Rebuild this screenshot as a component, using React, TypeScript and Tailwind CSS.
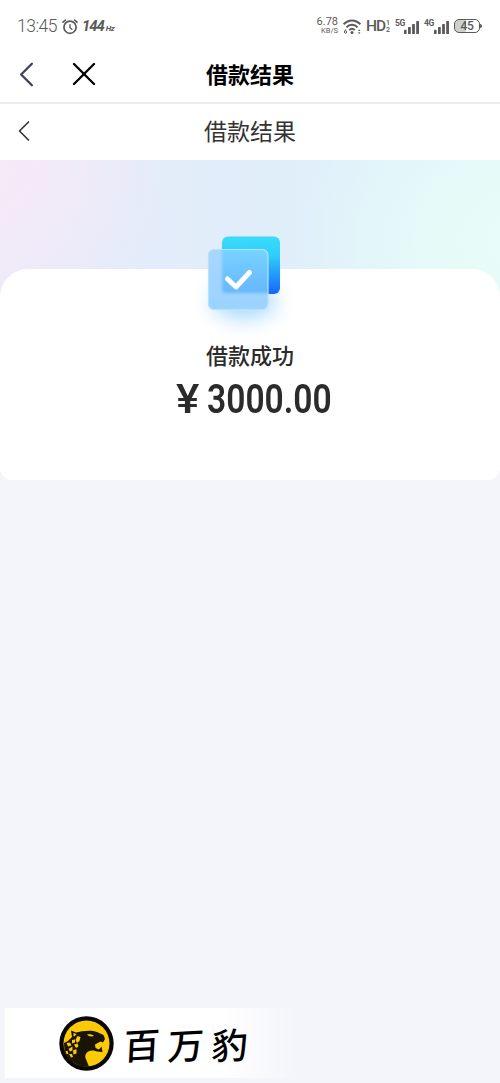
import { ChevronLeft, X } from "lucide-react";

function AlarmIcon() {
  return (
    <svg className="h-4 w-4 shrink-0" viewBox="0 0 16 16" fill="none" stroke="#5a5a5a" strokeLinecap="round">
      <circle cx="8" cy="8.2" r="6.1" strokeWidth="1.7" />
      <path d="M1 3.2 3.4 1.2M15 3.2 12.6 1.2" strokeWidth="1.6" />
      <path d="M8 5.6v3.1l1.9 1.5" strokeWidth="1.4" />
    </svg>
  );
}

function WifiIcon() {
  return (
    <svg className="h-4 w-[18px] shrink-0" viewBox="0 0 18 16" fill="none" stroke="#5a5a5a" strokeWidth="2">
      <path d="M.7 5.3C5.5.2 12.500.2 17.300 5.300" />
      <path d="M3.500 8.300c3-3.300 8-3.300 11 0" />
      <path d="M6.300 11.100c1.600-1.700 3.800-1.700 5.400 0" />
      <circle cx="9" cy="13.400" r="1.500" fill="#5a5a5a" stroke="none" />
      <path d="M2.800 10.400 1.700 12.200" strokeWidth="1" />
      <circle cx="2.500" cy="13" r="1.200" strokeWidth="1" />
      <path d="m15 12 1.200-1.800 1.200 1.800zm0 1.200 1.200 1.800 1.200-1.800z" fill="#5a5a5a" stroke="none" />
    </svg>
  );
}

function SignalIcon() {
  return (
    <svg className="h-[14px] w-[15px] shrink-0" viewBox="0 0 15 14" fill="#5a5a5a">
      <rect x="0" y="9.8" width="2.6" height="4.2" rx=".6" />
      <rect x="4" y="7" width="2.8" height="7" rx=".6" />
      <rect x="8.1" y="4" width="2.8" height="10" rx=".6" />
      <rect x="12.2" y="1" width="2.8" height="13" rx=".6" />
    </svg>
  );
}

function StatusBar() {
  return (
    <div className="flex h-[50px] items-center pt-[3px] pr-[18px] pl-[17px] text-[#5a5a5a]">
      <span className="w-[41px] text-[17.5px] leading-none font-light tracking-[-0.5px]">13:45</span>
      <span className="ml-1">
        <AlarmIcon />
      </span>
      <span className="ml-1 flex items-baseline leading-none font-bold italic">
        <span className="text-[15px] tracking-[-1.1px]">144</span>
        <span className="ml-0.5 text-[8px] tracking-[-0.5px]">Hz</span>
      </span>
      <div className="ml-auto flex items-center">
        <div className="mr-[5px] flex w-[22px] flex-col items-end pb-0.5">
          <span className="text-[11px] leading-[10px]">6.78</span>
          <span className="text-[7.5px] leading-[8px]">KB/S</span>
        </div>
        <WifiIcon />
        <span className="ml-[5px] w-[20px] text-[15.5px] leading-none font-medium tracking-[-1px]">HD</span>
        <span className="flex w-1 flex-col text-[7px] leading-[7px] font-medium">
          <span>1</span>
          <span>2</span>
        </span>
        <span className="ml-[5px] h-4 w-[9px] text-[8.5px] leading-[8px] font-bold tracking-[-0.5px]">5G</span>
        <SignalIcon />
        <span className="ml-[5px] h-4 w-[10px] text-[8.5px] leading-[8px] font-bold tracking-[-0.5px]">4G</span>
        <SignalIcon />
        <div className="-mt-px ml-[5px] flex items-center">
          <div className="flex h-[14px] w-[26px] items-center justify-center rounded-[5px] border-[1.5px] border-[#5a5a5a] bg-linear-to-r from-[#cfcfcf] from-45% to-white to-45% text-[12px] leading-none font-medium tracking-[-0.3px]">
            45
          </div>
          <span className="h-1 w-[2px] rounded-r bg-[#5a5a5a]" />
        </div>
      </div>
    </div>
  );
}

function SuccessIcon() {
  return (
    <svg className="h-[120px] w-[130px]" viewBox="0 0 130 120" fill="none">
      <defs>
        <linearGradient id="back" x1="71" y1="16" x2="73" y2="74" gradientUnits="userSpaceOnUse">
          <stop stopColor="#3bdcfa" />
          <stop offset=".35" stopColor="#2fcdfa" />
          <stop offset="1" stopColor="#1669fa" />
        </linearGradient>
        <linearGradient id="front" x1="50" y1="29" x2="50" y2="90" gradientUnits="userSpaceOnUse">
          <stop stopColor="#a8d7fd" />
          <stop offset="1" stopColor="#9bd3ff" />
        </linearGradient>
        <linearGradient id="overlap" x1="65" y1="29" x2="65" y2="74" gradientUnits="userSpaceOnUse">
          <stop stopColor="#77d3ff" />
          <stop offset="1" stopColor="#66b6fd" />
        </linearGradient>
        <filter id="glow" x="-50%" y="-80%" width="200%" height="260%">
          <feGaussianBlur stdDeviation="10" />
        </filter>
        <filter id="soft" x="-20%" y="-20%" width="140%" height="140%">
          <feGaussianBlur stdDeviation="1.5" />
        </filter>
        <clipPath id="tile">
          <rect x="28" y="29" width="60" height="61" rx="6" />
        </clipPath>
      </defs>
      <ellipse cx="64" cy="82" rx="32" ry="17" fill="#8dceff" opacity=".75" filter="url(#glow)" />
      <rect x="42" y="16.5" width="58" height="57.5" rx="6" fill="url(#back)" />
      <rect x="28" y="29" width="60" height="61" rx="6" fill="url(#front)" />
      <g clipPath="url(#tile)">
        <rect x="42" y="20" width="60" height="53" rx="4" fill="url(#overlap)" filter="url(#soft)" />
      </g>
      <rect x="28.5" y="29.5" width="59.5" height="60" rx="6" stroke="#b4e4ff" strokeWidth="1.2" />
      <path d="m47.5 59 8.5 8 13.5-14.5" stroke="#fff" strokeWidth="5" strokeLinecap="round" strokeLinejoin="round" />
    </svg>
  );
}

function LeopardLogo() {
  return (
    <svg className="h-[55px] w-[55px] shrink-0" viewBox="0 0 55 55">
      <circle cx="27.5" cy="27.5" r="27.2" fill="#090806" />
      <circle cx="27.5" cy="27.5" r="23" fill="#fdcb05" />
      <path
        d="M12 14.5 17 16.500C22 15.500 31 13.500 38 16L44.500 19 46 23 44 26.500 41.500 25.500 36 28.500 36.500 32 40 33.500 42.500 30.500 43.500 36 38 35.500 34.500 34.500C29 34 26 37.500 26.300 41.500L30 50.400C20 52 9 45 5.500 35L5 27 9 25 13 21Z"
        fill="#1b1303"
      />
      <path d="M28 18.500c3-.5 5.500 0 7 1.500-2.500.8-5.500.5-7-1.500Z" fill="#fdcb05" />
      <g fill="#fdcb05">
        <path d="m14.500 17 3 1-2 2.500-1-.5zM18.500 20l3 1-1 4-2.500 2-1.500-3zM13 24l3-.5 0 3-3 1zM7.500 27l3.500-.5 1.500 3-3.500 1zM15 28.500l3.500-1 1 3-2.500 1.500zM9.500 33l4-2.500 0 4-2.500 1zM6.500 35l2 0 1 3-2 0zM14 34.500l3.500-1.500 0 4.500-3 1zM10 38l3 0 1 3-2 .5z" />
      </g>
    </svg>
  );
}

export default function App() {
  return (
    <main className="flex h-[1083px] w-[500px] flex-col overflow-hidden bg-[#f4f5fa] font-[Roboto,'Noto_Sans_CJK_SC',sans-serif]">
      <header className="bg-white">
        <StatusBar />
        <nav className="grid h-[52px] grid-cols-[1fr_auto_1fr] items-center">
          <div className="-mt-1 flex items-center">
            <ChevronLeft className="ml-[5px] h-[43px] w-[43px] text-[#3f4060]" strokeWidth={1.3} />
            <X className="ml-[16px] h-10 w-10 text-black" strokeWidth={1.4} />
          </div>
          <h1 className="text-[22px] leading-none font-bold text-black">借款结果</h1>
        </nav>
        <div className="h-0.5 bg-[#ececec]" />
        <nav className="grid h-14 grid-cols-[1fr_auto_1fr] items-center">
          <ChevronLeft className="mb-[3px] ml-1.5 h-9 w-9 text-[#333]" strokeWidth={1.1} />
          <h2 className="pt-px text-[23px] leading-none text-[#333]">借款结果</h2>
        </nav>
      </header>

      <section className="h-[320px] bg-[radial-gradient(ellipse_200px_150px_at_-5%_5%,#f8e9f8_0%,#f8e9f800_100%),radial-gradient(ellipse_220px_190px_at_102%_40%,#e8fdf8_0%,#e8fdf8d0_30%,#e8fdf800_100%),linear-gradient(90deg,#ecebf9_0%,#e3ecfa_30%,#e0eefa_55%,#def4fb_100%)] bg-[length:100%_200px] bg-no-repeat pt-[109px]">
        <div className="flex h-[211px] flex-col items-center rounded-t-[28px] rounded-b-xl bg-white">
          <div className="-mt-[49px] mr-[10px] h-[120px]">
            <SuccessIcon />
          </div>
          <div className="flex w-full flex-col items-center text-[#2b2b2b]">
            <p className="text-[22px] leading-[33px] font-medium">借款成功</p>
            <div className="mt-1 flex w-full pl-[176px] text-[40px] leading-[46px]">
              <span className="w-[31px] origin-left scale-x-110 font-medium">¥</span>
              <span className="origin-left scale-x-[0.84] font-semibold">3000.00</span>
            </div>
          </div>
        </div>
      </section>

      <footer className="mt-auto mb-[5px] ml-[5px] flex h-[70px] w-[290px] items-center bg-linear-to-r from-white from-75% to-[#f4f5fa] pl-[54px]">
        <LeopardLogo />
        <div className="ml-2.5 flex -skew-x-6 gap-2 font-['Noto_Sans_CJK_SC',sans-serif] text-[36px] leading-none font-medium text-black">
          <span className="-rotate-3">百</span>
          <span className="-rotate-3">万</span>
          <span className="-rotate-3">豹</span>
        </div>
      </footer>
    </main>
  );
}
